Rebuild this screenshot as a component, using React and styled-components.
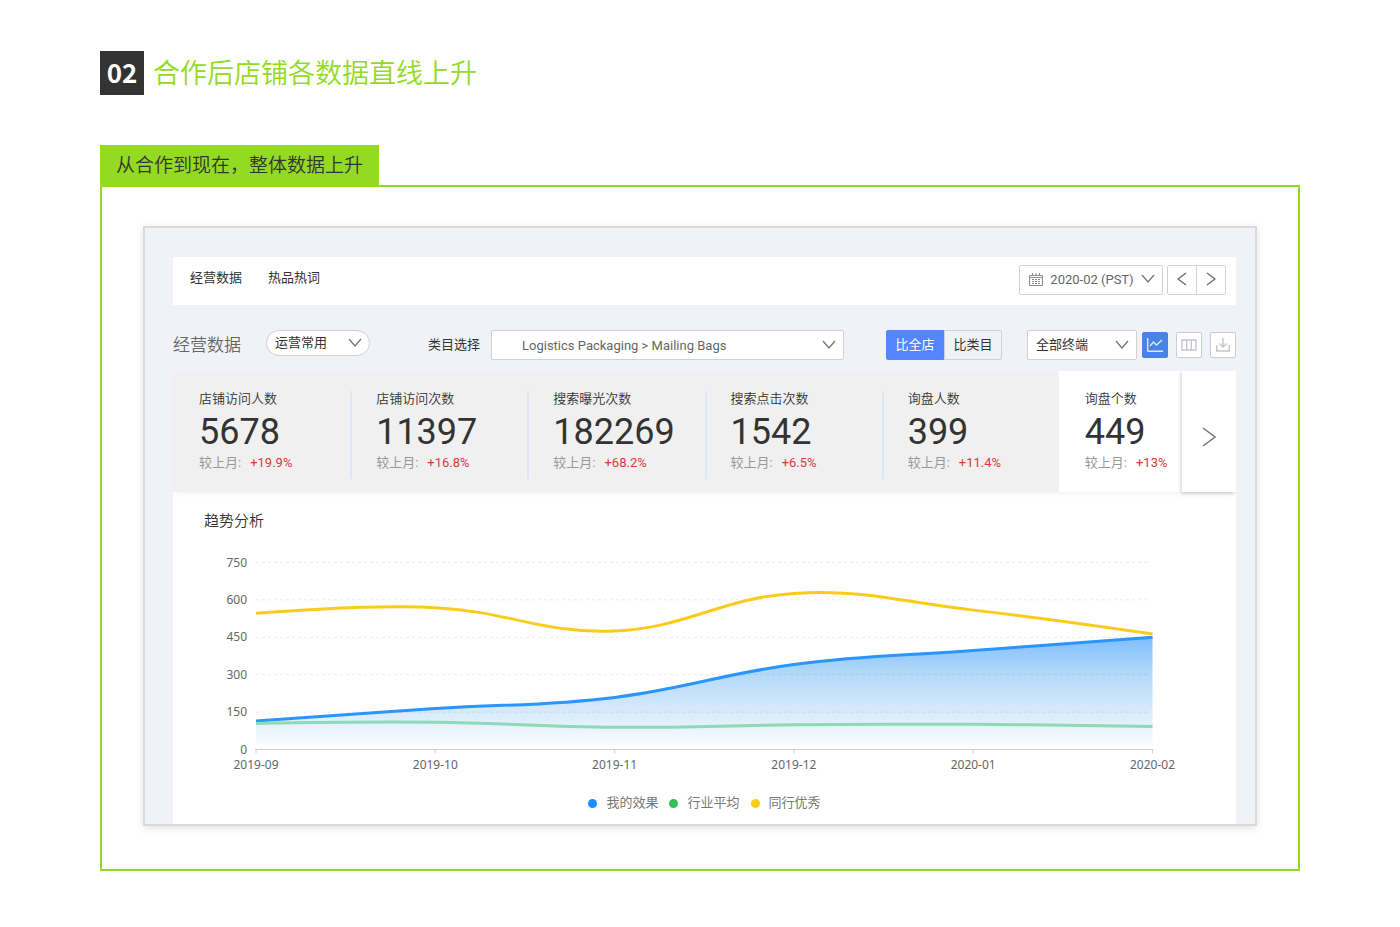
import styled, { createGlobalStyle } from "styled-components";

const stats = [
  { label: "店铺访问人数", value: "5678", change: "+19.9%" },
  { label: "店铺访问次数", value: "11397", change: "+16.8%" },
  { label: "搜索曝光次数", value: "182269", change: "+68.2%" },
  { label: "搜索点击次数", value: "1542", change: "+6.5%" },
  { label: "询盘人数", value: "399", change: "+11.4%" },
  { label: "询盘个数", value: "449", change: "+13%" },
];

const months = ["2019-09", "2019-10", "2019-11", "2019-12", "2020-01", "2020-02"];
const ticks = [0, 150, 300, 450, 600, 750];

const mine = [114, 164, 209, 341, 397, 450];
const average = [104, 109, 89, 99, 101, 92];
const best = [546, 569, 475, 626, 559, 463];

const legend = [
  { name: "我的效果", color: "#1890ff" },
  { name: "行业平均", color: "#2fc25b" },
  { name: "同行优秀", color: "#facc14" },
];

const LEFT = 83;
const STEP = 179.3;
const BASE = 217.5;

const xAt = (i) => LEFT + i * STEP;
const yAt = (value) => BASE - (value / 750) * 187;

// smooth line: control points follow the slope between both neighbours
function linePath(values) {
  const pts = values.map((v, i) => [xAt(i), yAt(v)]);
  const slope = (i) =>
    i === 0 || i === pts.length - 1
      ? null
      : (pts[i + 1][1] - pts[i - 1][1]) / (pts[i + 1][0] - pts[i - 1][0]);
  const reach = STEP * 0.4;
  let d = `M${pts[0][0]},${pts[0][1]}`;
  for (let i = 1; i < pts.length; i++) {
    const a = pts[i - 1];
    const b = pts[i];
    const sa = slope(i - 1);
    const sb = slope(i);
    const c1 = sa === null ? a : [a[0] + reach, a[1] + sa * reach];
    const c2 = sb === null ? b : [b[0] - reach, b[1] - sb * reach];
    d += `C${c1[0]},${c1[1]} ${c2[0]},${c2[1]} ${b[0]},${b[1]}`;
  }
  return d;
}

function Chevron() {
  return (
    <ChevronIcon viewBox="0 0 14 10" width="14" height="10">
      <path d="M1 1l6 7 6-7" />
    </ChevronIcon>
  );
}

function TrendChart() {
  const end = xAt(5);
  return (
    <ChartSvg viewBox="0 0 1063 253" role="img" aria-label="趋势分析">
      <defs>
        <linearGradient id="fill" x1="0" y1="0" x2="0" y2="1">
          <stop offset="0" stopColor="#7ebcfd" />
          <stop offset="0.15" stopColor="#98cbfa" />
          <stop offset="0.35" stopColor="#b4dbf7" />
          <stop offset="0.7" stopColor="#dcecfb" />
          <stop offset="1" stopColor="#ffffff" />
        </linearGradient>
      </defs>
      <path d={`${linePath(mine)}L${end},${BASE}L${LEFT},${BASE}Z`} fill="url(#fill)" />
      {ticks.map((t) => (
        <g key={t}>
          {t > 0 && (
            <path d={`M${LEFT},${yAt(t)}H${end - 3}`} stroke="#000" strokeOpacity="0.08" strokeDasharray="3 3" />
          )}
          <AxisText x={74} y={yAt(t) + 4} textAnchor="end">{t}</AxisText>
        </g>
      ))}
      <path d={`M${LEFT - 1},${BASE}H${end + 1}`} stroke="#d0d0d0" />
      {months.map((m, i) => (
        <g key={m}>
          <path d={`M${xAt(i)},${BASE}v4`} stroke="#d0d0d0" />
          <AxisText x={xAt(i)} y={237} textAnchor="middle">{m}</AxisText>
        </g>
      ))}
      <g fill="none" strokeWidth="3">
        <path d={linePath(mine)} stroke="#2b95fb" />
        <path d={linePath(average)} stroke="#8bdbb5" />
        <path d={linePath(best)} stroke="#fbcb1c" />
      </g>
    </ChartSvg>
  );
}

function App() {
  return (
    <Page>
      <GlobalStyle />
      <Heading>
        <HeadingNumber>02</HeadingNumber>
        <HeadingText>合作后店铺各数据直线上升</HeadingText>
      </Heading>

      <Caption>从合作到现在，整体数据上升</Caption>
      <GreenBox>
        <Dashboard>
          <TopBar>
            <Tabs>
              <TabLink href="#data">经营数据</TabLink>
              <TabLink href="#hot">热品热词</TabLink>
            </Tabs>
            <DateButton type="button">
              <svg width="14" height="13" viewBox="0 0 14 13" fill="none" stroke="#8a8a8a">
                <path d="M.5 2.5h13v10H.5zM.5 4.5h13M3.5 0v3M7 0v3M10.5 0v3" />
                <path d="M3 6.5h8M3 8.5h8M3 10.5h8" strokeDasharray="2 1" />
              </svg>
              <span>2020-02 (PST)</span>
              <Chevron />
            </DateButton>
            <Pager>
              <PagerButton type="button" aria-label="上个月">
                <svg width="10" height="14" viewBox="0 0 10 14"><path d="M9 1L1 7l8 6" /></svg>
              </PagerButton>
              <PagerButton type="button" aria-label="下个月">
                <svg width="10" height="14" viewBox="0 0 10 14"><path d="M1 1l8 6-8 6" /></svg>
              </PagerButton>
            </Pager>
          </TopBar>

          <Filters>
            <FilterTitle>经营数据</FilterTitle>
            <PillWrap>
              <PillSelect aria-label="指标">
                <option>运营常用</option>
              </PillSelect>
              <Chevron />
            </PillWrap>
            <FilterLabel htmlFor="category">类目选择</FilterLabel>
            <CategoryWrap>
              <CategorySelect id="category">
                <option>Logistics Packaging &gt; Mailing Bags</option>
              </CategorySelect>
              <Chevron />
            </CategoryWrap>
            <Toggle>
              <ToggleButton type="button" $active>比全店</ToggleButton>
              <ToggleButton type="button">比类目</ToggleButton>
            </Toggle>
            <DeviceWrap>
              <Select aria-label="终端">
                <option>全部终端</option>
              </Select>
              <Chevron />
            </DeviceWrap>
            <IconButtons>
              <IconButton type="button" aria-label="图表" $active>
                <svg width="16" height="14" viewBox="0 0 16 14">
                  <path d="M.7 0v12.5q0 .8.8.8H16M3 8l3.5-4 3 3L15 2" />
                </svg>
              </IconButton>
              <IconButton type="button" aria-label="表格">
                <svg width="16" height="12" viewBox="0 0 16 12">
                  <path d="M1 1h14v10H1zM5.7 1v10M10.3 1v10" />
                </svg>
              </IconButton>
              <IconButton type="button" aria-label="下载">
                <svg width="14" height="14" viewBox="0 0 14 14">
                  <path d="M7 0v9M3.5 5.5L7 9l3.5-3.5M.7 7v6h12.6V7" />
                </svg>
              </IconButton>
            </IconButtons>
          </Filters>

          <Stats>
            {stats.map((s, i) => (
              <Stat key={s.label} $active={i === 5}>
                <StatBody $divider={i > 0 && i < 5}>
                  <StatLabel>{s.label}</StatLabel>
                  <StatValue>{s.value}</StatValue>
                  <StatCompare>
                    较上月:<StatChange>{s.change}</StatChange>
                  </StatCompare>
                </StatBody>
              </Stat>
            ))}
            <NextButton type="button" aria-label="更多指标">
              <svg width="14" height="20" viewBox="0 0 14 20"><path d="M1 1l12 9-12 9" /></svg>
            </NextButton>
          </Stats>

          <Trend>
            <TrendTitle>趋势分析</TrendTitle>
            <TrendChart />
            <Legend>
              {legend.map((l) => (
                <LegendItem key={l.name} $color={l.color}>{l.name}</LegendItem>
              ))}
            </Legend>
          </Trend>
        </Dashboard>
      </GreenBox>
    </Page>
  );
}

export default App;

const GlobalStyle = createGlobalStyle`
  * {
    box-sizing: border-box;
  }
  body {
    margin: 0;
    background: #fff;
    color: #333;
    font-family: Roboto, "Noto Sans CJK SC", sans-serif;
    font-size: 13px;
  }
  button, select {
    font: inherit;
    color: inherit;
    margin: 0;
    cursor: pointer;
  }
`;

const Page = styled.main`
  padding: 51px 100px 56px;
`;

const Heading = styled.header`
  display: flex;
  height: 44px;
  margin-bottom: 50px;
`;

const HeadingNumber = styled.span`
  width: 44px;
  background: #333;
  color: #fff;
  font-family: "Noto Sans CJK SC", sans-serif;
  font-size: 26px;
  font-weight: 700;
  line-height: 42px;
  text-align: center;
`;

const HeadingText = styled.h1`
  margin: 0 0 0 9px;
  color: #93da23;
  font-family: "Noto Sans CJK SC", sans-serif;
  font-size: 27px;
  font-weight: 350;
  line-height: 42px;
`;

const Caption = styled.h2`
  width: fit-content;
  margin: 0;
  padding: 2px 16px 0;
  background: #93da23;
  color: #333;
  font-size: 19px;
  font-weight: 350;
  line-height: 38px;
`;

const GreenBox = styled.section`
  padding: 39px 41px 43px;
  border: 2px solid #93da23;
`;

const Dashboard = styled.div`
  padding: 29px 19px 0 28px;
  border: 2px solid #d9d9d9;
  background: #f1f2f7;
  box-shadow: 0 2px 8px rgba(0, 0, 0, 0.12);
`;

const TopBar = styled.div`
  display: flex;
  align-items: flex-start;
  height: 48px;
  padding: 8px 10px 0 17px;
  background: #fff;
`;

const Tabs = styled.nav`
  display: flex;
  gap: 26px;
  flex: 1;
`;

const TabLink = styled.a`
  color: #333;
  line-height: 26px;
  text-decoration: none;
`;

const ChevronIcon = styled.svg`
  fill: none;
  stroke: #777;
  stroke-width: 1.3;
  pointer-events: none;
`;

const DateButton = styled.button`
  display: flex;
  align-items: center;
  justify-content: space-between;
  width: 144px;
  height: 30px;
  margin-right: 4px;
  padding: 0 7px 2px 9px;
  border: 1px solid #cfd0d8;
  border-radius: 2px;
  background: #fff;
  color: #666;
`;

const Pager = styled.div`
  display: flex;
  height: 30px;
  border: 1px solid #cfd0d8;
  border-radius: 2px;
`;

const PagerButton = styled.button`
  display: flex;
  align-items: center;
  justify-content: center;
  width: 28px;
  padding: 0 0 2px;
  border: 0;
  background: #fff;
  & + & {
    width: 29px;
    border-left: 1px solid #cfd0d8;
  }
  svg {
    fill: none;
    stroke: #666;
    stroke-width: 1.3;
  }
`;

const Filters = styled.div`
  display: flex;
  align-items: center;
  height: 30px;
  margin: 25px 0 11px;
`;

const FilterTitle = styled.h3`
  margin: 0 25px 0 0;
  color: #666;
  font-size: 17px;
  font-weight: 350;
  line-height: 24px;
`;

const FilterLabel = styled.label`
  margin: 0 11px 0 58px;
  padding-bottom: 4px;
`;

const SelectWrap = styled.div`
  position: relative;
  ${ChevronIcon} {
    position: absolute;
    top: 50%;
    right: 8px;
    margin-top: -5px;
  }
`;

const PillWrap = styled(SelectWrap)`
  width: 104px;
  height: 26px;
  align-self: flex-start;
`;

const CategoryWrap = styled(SelectWrap)`
  flex: 1;
  margin-right: 42px;
`;

const DeviceWrap = styled(SelectWrap)`
  width: 110px;
  margin-right: 5px;
`;

const Select = styled.select`
  display: block;
  width: 100%;
  height: 30px;
  padding: 0 8px 2px;
  border: 1px solid #cfd0d8;
  border-radius: 2px;
  background: #fff;
  appearance: none;
`;

const PillSelect = styled(Select)`
  height: 26px;
  border-radius: 13px;
`;

const CategorySelect = styled(Select)`
  padding: 0 30px;
  color: #666;
`;

const Toggle = styled.div`
  display: flex;
  margin-right: 25px;
`;

const ToggleButton = styled.button`
  width: 58px;
  height: 30px;
  padding: 0 0 4px;
  border: 1px solid ${(p) => (p.$active ? "#5584ff" : "#cfd0d8")};
  border-radius: ${(p) => (p.$active ? "2px 0 0 2px" : "0 2px 2px 0")};
  background: ${(p) => (p.$active ? "#5584ff" : "#f1f2f7")};
  color: ${(p) => (p.$active ? "#fff" : "#333")};
`;

const IconButtons = styled.div`
  display: flex;
  gap: 8px;
  padding-bottom: 1px;
`;

const IconButton = styled.button`
  display: flex;
  align-items: center;
  justify-content: center;
  width: 26px;
  height: 26px;
  padding: 0;
  border: 1px solid ${(p) => (p.$active ? "#4a83e6" : "#cbcdd6")};
  border-radius: 2px;
  background: ${(p) => (p.$active ? "#4a83e6" : "#fff")};
  svg {
    fill: none;
    stroke: ${(p) => (p.$active ? "#dbe7fb" : "#c3c6cf")};
    stroke-width: 1.4;
  }
`;

const Stats = styled.div`
  position: relative;
  display: grid;
  grid-template-columns: repeat(6, 1fr);
  box-shadow: 0 5px 5px -3px rgba(0, 0, 0, 0.05);
`;

const Stat = styled.div`
  padding: 20px 0 13px;
  background: ${(p) => (p.$active ? "#fff" : "#f0f0f0")};
`;

const StatBody = styled.div`
  padding: 0 0 7px 24px;
  border-left: 2px solid ${(p) => (p.$divider ? "#dfe4f6" : "transparent")};
`;

const StatLabel = styled.div`
  font-weight: 350;
  line-height: 16px;
`;

const StatValue = styled.div`
  margin-top: 3px;
  font-size: 36px;
  line-height: 44px;
`;

const StatCompare = styled.div`
  color: #999;
  line-height: 18px;
`;

const StatChange = styled.span`
  margin-left: 9px;
  color: #e0383e;
`;

// covers the right part of the last card
const NextButton = styled.button`
  position: absolute;
  top: 0;
  right: 0;
  bottom: 0;
  display: flex;
  align-items: center;
  justify-content: center;
  width: 54px;
  padding: 10px 0 0;
  border: 0;
  background: #fff;
  box-shadow: -1px 1px 4px rgba(0, 0, 0, 0.2);
  clip-path: inset(0 0 -6px -6px);
  svg {
    fill: none;
    stroke: #777;
    stroke-width: 1.5;
  }
`;

const Trend = styled.section`
  padding: 18px 0 11px;
  background: #fff;
`;

const TrendTitle = styled.h3`
  margin: 0 31px;
  font-size: 15px;
  font-weight: 350;
  line-height: 22px;
`;

const ChartSvg = styled.svg`
  display: block;
  width: 100%;
`;

const AxisText = styled.text`
  fill: #666;
  font-family: "Noto Sans", sans-serif;
  font-size: 12px;
`;

const Legend = styled.ul`
  display: flex;
  justify-content: center;
  gap: 11px;
  margin: 8px 0 0;
  padding: 0;
  list-style: none;
`;

const LegendItem = styled.li`
  display: flex;
  align-items: center;
  color: #777;
  line-height: 20px;
  &::before {
    content: "";
    width: 9px;
    height: 9px;
    margin-right: 9px;
    border-radius: 50%;
    background: ${(p) => p.$color};
  }
`;
